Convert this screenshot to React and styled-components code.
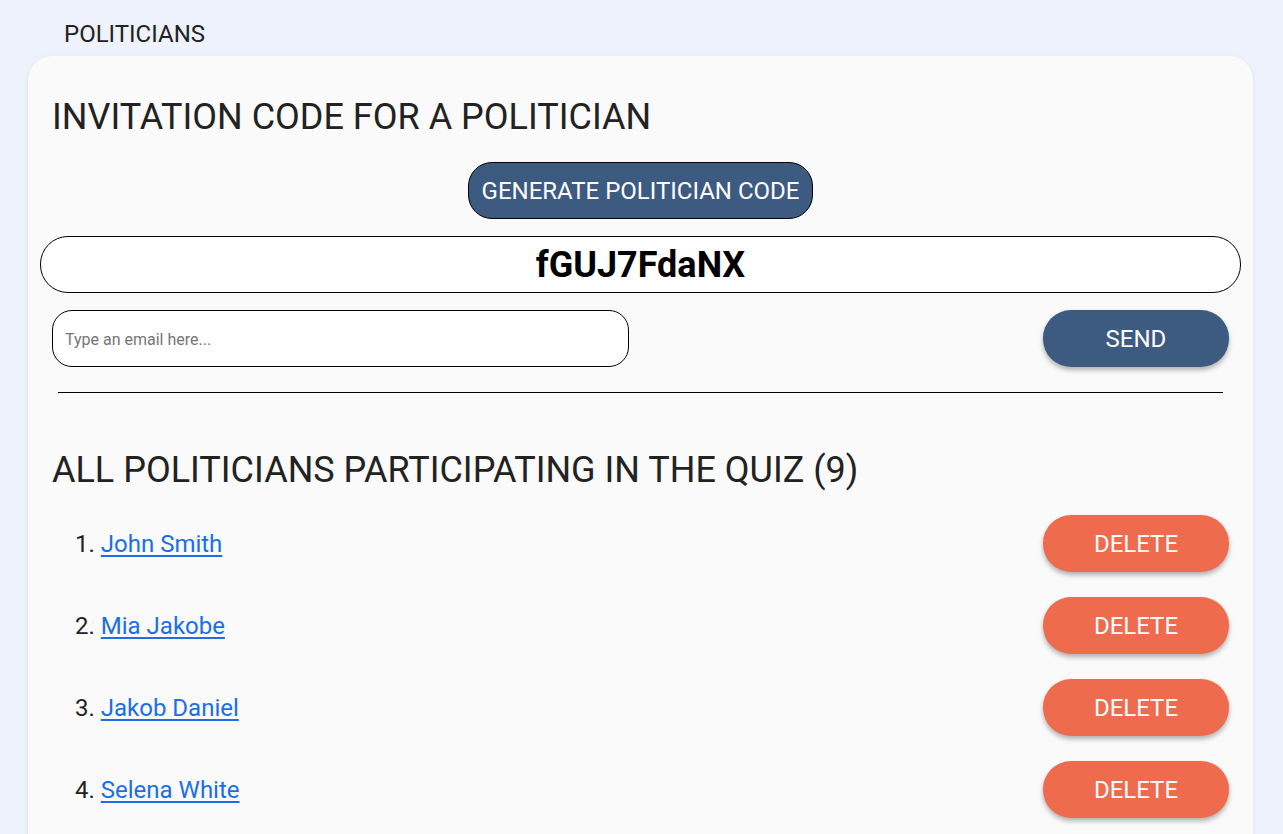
import React, { useState } from 'react';
import styled, { createGlobalStyle } from 'styled-components';

const GlobalStyle = createGlobalStyle`
  body {
    margin: 0;
    background: #edf2fc;
    font-family: Roboto, 'Liberation Sans', sans-serif;
    color: #222;
  }
`;

const politicians = [
  'John Smith',
  'Mia Jakobe',
  'Jakob Daniel',
  'Selena White',
  'Mark Brown',
  'Anna Berg',
  'Peter Novak',
  'Laura King',
  'David Lee',
];

const App = () => {
  const [email, setEmail] = useState('');
  const [code] = useState('fGUJ7FdaNX');

  return (
    <Wrapper>
      <GlobalStyle />
      <PageTitle>POLITICIANS</PageTitle>
      <Card>
        <Heading>INVITATION CODE FOR A POLITICIAN</Heading>
        <GenerateButton type="button">GENERATE POLITICIAN CODE</GenerateButton>
        <CodeBox>{code}</CodeBox>
        <EmailRow>
          <EmailInput
            type="email"
            placeholder="Type an email here..."
            value={email}
            onChange={(e) => setEmail(e.target.value)}
          />
          <PillButton type="button" color="#3d5a80">
            SEND
          </PillButton>
        </EmailRow>
        <Divider />
        <Heading second>
          ALL POLITICIANS PARTICIPATING IN THE QUIZ ({politicians.length})
        </Heading>
        <List>
          {politicians.map((name, i) => (
            <Row key={name}>
              <Name>
                {i + 1}. <a href="#">{name}</a>
              </Name>
              <PillButton type="button" color="#ee6c4d">
                DELETE
              </PillButton>
            </Row>
          ))}
        </List>
      </Card>
    </Wrapper>
  );
};

const Wrapper = styled.main`
  padding: 20px 30px 40px 28px;
`;

const PageTitle = styled.h1`
  margin: 0 0 8px 36px;
  font-size: 24px;
  font-weight: 400;
  line-height: 28px;
  color: #222;
`;

const Card = styled.section`
  background: #fafafa;
  border-radius: 24px;
  box-shadow: 0 1px 4px rgba(0, 0, 0, 0.08);
  padding: 40px 12px 40px 12px;
  display: flex;
  flex-direction: column;
`;

const Heading = styled.h2`
  margin: ${(p) => (p.second ? '56px 0 24px 12px' : '0 0 24px 12px')};
  font-size: 36px;
  font-weight: 400;
  line-height: 42px;
  color: #222;
`;

const GenerateButton = styled.button`
  align-self: center;
  height: 57px;
  padding: 0 13px;
  background: #3d5a80;
  color: #fff;
  border: 1px solid #000;
  border-radius: 24px;
  font-family: inherit;
  font-size: 24px;
  cursor: pointer;
`;

const CodeBox = styled.div`
  margin-top: 17px;
  height: 57px;
  box-sizing: border-box;
  border: 1px solid #000;
  border-radius: 28px;
  background: #fff;
  display: flex;
  align-items: center;
  justify-content: center;
  font-size: 36px;
  font-weight: 700;
  color: #000;
`;

const EmailRow = styled.div`
  margin-top: 17px;
  padding: 0 12px 0 12px;
  display: flex;
  align-items: center;
  justify-content: space-between;
`;

const EmailInput = styled.input`
  width: 577px;
  height: 57px;
  box-sizing: border-box;
  padding: 1px 12px 0;
  border: 1px solid #000;
  border-radius: 20px;
  background: #fff;
  font-family: inherit;
  font-size: 16px;
  outline: none;
  ::placeholder {
    color: #757575;
  }
`;

const PillButton = styled.button`
  width: 186px;
  height: 57px;
  border: none;
  border-radius: 28px;
  background: ${(p) => p.color};
  color: #fff;
  font-family: inherit;
  font-size: 24px;
  box-shadow: 0 3px 5px rgba(0, 0, 0, 0.3);
  cursor: pointer;
`;

const Divider = styled.hr`
  margin: 25px 18px 0 18px;
  border: none;
  border-top: 1px solid #000;
`;

const List = styled.ol`
  list-style: none;
  margin: 0;
  padding: 0 12px 0 35px;
  display: flex;
  flex-direction: column;
  gap: 25px;
`;

const Row = styled.li`
  display: flex;
  align-items: center;
  justify-content: space-between;
`;

const Name = styled.span`
  font-size: 24px;
  color: #222;
  a {
    color: #1a6ee6;
    text-decoration: underline;
    text-underline-offset: 3px;
  }
`;

export default App;
